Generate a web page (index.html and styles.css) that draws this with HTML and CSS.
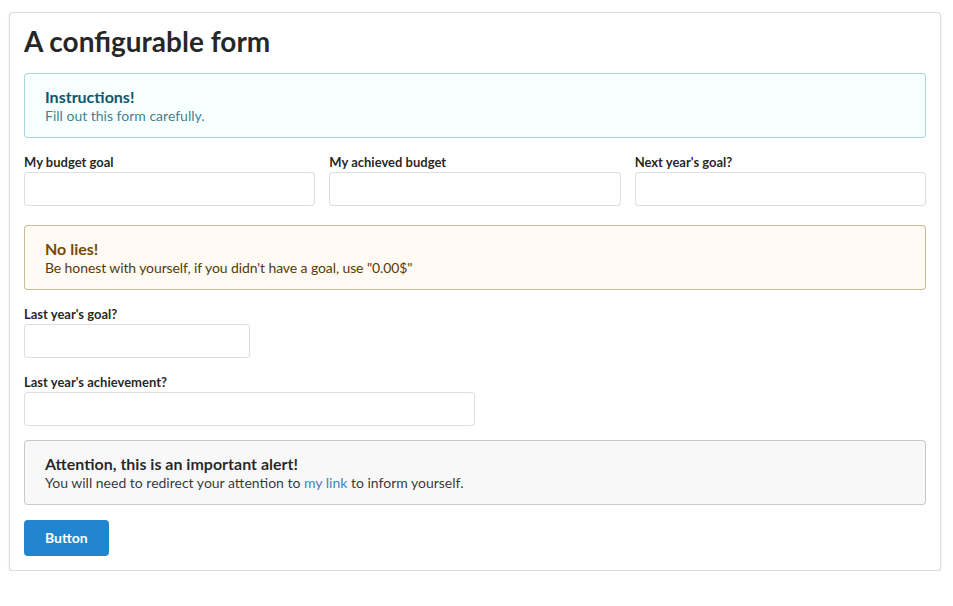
FILE: index.html
```html
<!DOCTYPE html>
<html lang="en">
<head>
<meta charset="utf-8">
<title>A configurable form</title>
<link rel="stylesheet" href="styles.css">
</head>
<body>
<div class="segment">
  <h1 class="title">A configurable form</h1>
  <div class="message info">
    <div class="msg-header">Instructions!</div>
    <p class="msg-text">Fill out this form carefully.</p>
  </div>
  <div class="fields-row">
    <div class="field">
      <label class="label">My budget goal</label>
      <input class="input" type="text">
    </div>
    <div class="field">
      <label class="label">My achieved budget</label>
      <input class="input" type="text">
    </div>
    <div class="field">
      <label class="label">Next year's goal?</label>
      <input class="input" type="text">
    </div>
  </div>
  <div class="message warning">
    <div class="msg-header">No lies!</div>
    <p class="msg-text">Be honest with yourself, if you didn't have a goal, use "0.00$"</p>
  </div>
  <div class="field four-wide">
    <label class="label">Last year's goal?</label>
    <input class="input" type="text">
  </div>
  <div class="field eight-wide">
    <label class="label">Last year's achievement?</label>
    <input class="input" type="text">
  </div>
  <div class="message plain">
    <div class="msg-header">Attention, this is an important alert!</div>
    <p class="msg-text">You will need to redirect your attention to <a class="link" href="#">my link</a> to inform yourself.</p>
  </div>
  <button class="button" type="button">Button</button>
</div>
</body>
</html>
```

FILE: styles.css
```css
html, body {
  margin: 0;
  padding: 0;
  background: #ffffff;
}

body {
  padding: 12px 0 0 9px;
  font-family: Lato, "Helvetica Neue", Arial, sans-serif;
  font-size: 14px;
  line-height: 20px;
  color: rgba(0, 0, 0, 0.87);
}

.segment {
  box-sizing: border-box;
  width: 932px;
  padding: 14px;
  border: 1px solid rgba(34, 36, 38, 0.15);
  border-radius: 4px;
  box-shadow: 0 1px 2px 0 rgba(34, 36, 38, 0.15);
  background: #fff;
  display: flex;
  flex-direction: column;
  align-items: stretch;
}

.title {
  margin: -4px 0 14px 0;
  font-size: 28px;
  line-height: 36px;
  font-weight: 700;
  color: rgba(0, 0, 0, 0.87);
}

.message {
  box-sizing: border-box;
  height: 65px;
  padding: 14px 21px;
  border-radius: 4px;
  margin: 0 0 14px 0;
}

.msg-header {
  font-size: 16px;
  line-height: 20px;
  font-weight: 700;
}

.msg-text {
  margin: 0;
  font-size: 14px;
  line-height: 17px;
}

.info {
  background: #f8ffff;
  box-shadow: 0 0 0 1px #a9d5de inset;
  color: #276f86;
}
.info .msg-header { color: #0e566c; }
.info .msg-text { color: rgba(39, 111, 134, 0.9); }

.warning {
  background: #fffaf3;
  box-shadow: 0 0 0 1px #c9ba9b inset;
  color: #573a08;
}
.warning .msg-header { color: #794b02; }
.warning .msg-text { letter-spacing: -0.1px; }

.plain {
  background: #f8f8f9;
  box-shadow: 0 0 0 1px rgba(34, 36, 38, 0.22) inset;
  color: rgba(0, 0, 0, 0.87);
  margin-bottom: 15px;
}
.plain .msg-header { color: rgba(0, 0, 0, 0.85); }
.plain .msg-text { color: rgba(0, 0, 0, 0.8); }

.link {
  color: #4183c4;
  text-decoration: none;
}

.fields-row {
  display: grid;
  grid-template-columns: 1fr 1fr 1fr;
  column-gap: 14px;
  margin-bottom: 19px;
}

.field {
  display: flex;
  flex-direction: column;
  margin-bottom: 14px;
}
.fields-row .field { margin-bottom: 0; }

.four-wide { width: 25%; }
.eight-wide { width: 50%; }

.label {
  font-size: 13px;
  line-height: 20px;
  font-weight: 700;
  color: rgba(0, 0, 0, 0.87);
}

.input {
  box-sizing: border-box;
  width: 100%;
  height: 34px;
  margin: 0;
  padding: 0 14px;
  font-family: inherit;
  font-size: 14px;
  border: 1px solid rgba(34, 36, 38, 0.15);
  border-radius: 4px;
  background: #fff;
  outline: none;
}

.button {
  align-self: flex-start;
  box-sizing: border-box;
  height: 36px;
  padding: 0 21px;
  margin: 0;
  border: none;
  border-radius: 4px;
  background: #2185d0;
  color: #fff;
  font-family: inherit;
  font-size: 14px;
  font-weight: 700;
  line-height: 1;
  cursor: pointer;
}
```
